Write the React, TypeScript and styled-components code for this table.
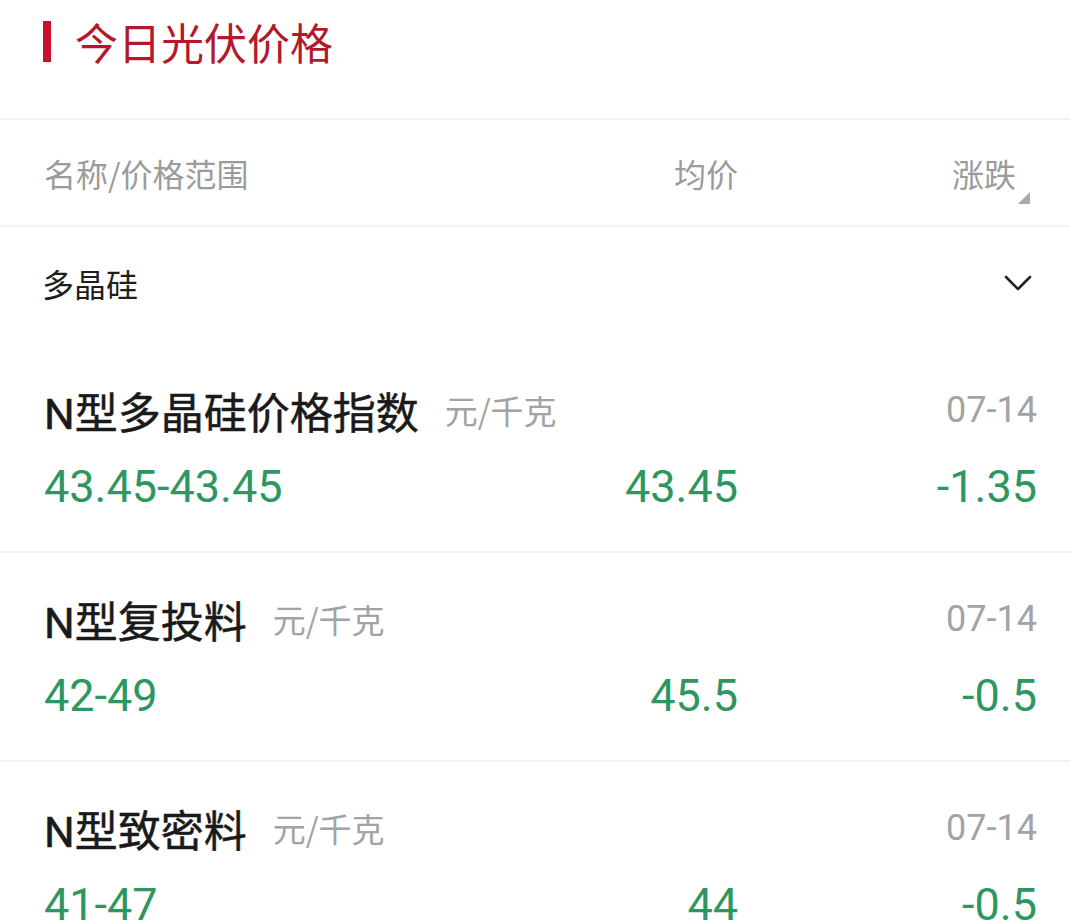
import React from 'react';
import styled, { createGlobalStyle } from 'styled-components';

const GlobalStyle = createGlobalStyle`
    body {
        margin: 0;
        background: #ffffff;
        font-family: Roboto, "Noto Sans CJK SC", sans-serif;
    }
`;

const Page = styled.div`
    width: 1070px;
    height: 922px;
    overflow: hidden;
    background: #ffffff;
`;

const TitleBar = styled.div`
    display: flex;
    align-items: center;
    gap: 24px;
    height: 120px;
    padding: 0 44px 36px 43px;
    box-sizing: border-box;
    border-bottom: 2px solid #f3f3f3;
`;

const Marker = styled.div`
    width: 8px;
    height: 41px;
    background: #c8102e;
`;

const Title = styled.h1`
    margin: 0;
    font-family: "Noto Sans CJK SC", sans-serif;
    font-size: 43px;
    font-weight: 400;
    line-height: 44px;
    color: #b3192b;
`;

const Grid = styled.div`
    display: grid;
    grid-template-columns: 1fr auto 299px;
    align-items: center;
    padding: 0 33px 0 44px;
`;

const HeaderRow = styled(Grid)`
    height: 105px;
    border-bottom: 2px solid #f3f3f3;
    font-family: "Noto Sans CJK SC", sans-serif;
    font-size: 32px;
    color: #9b9b9b;
`;

const HeadCell = styled.div<{ align?: string }>`
    text-align: ${(p) => p.align || 'left'};
`;

const SortLabel = styled.span`
    position: relative;
    margin-right: 21px;

    &::after {
        content: '';
        position: absolute;
        right: -14px;
        bottom: -8px;
        width: 0;
        height: 0;
        border-left: 12px solid transparent;
        border-bottom: 12px solid #a8a8a8;
    }
`;

const GroupRow = styled.div`
    display: flex;
    justify-content: space-between;
    align-items: center;
    height: 117px;
    padding: 0 38px 6px 42px;
    box-sizing: border-box;
    font-family: "Noto Sans CJK SC", sans-serif;
    font-size: 32px;
    color: #1e1e1e;
`;

const Item = styled.div`
    padding: 41px 33px 39px 44px;
    border-bottom: 2px solid #f3f3f3;
`;

const NameLine = styled.div`
    display: flex;
    align-items: center;
    height: 50px;
`;

const Name = styled.span`
    font-size: 43px;
    font-weight: 400;
    color: #1a1a1a;
    -webkit-text-stroke: 0.5px #1a1a1a;
`;

const Unit = styled.span`
    margin-left: 26px;
    font-family: "Noto Sans CJK SC", sans-serif;
    font-size: 33px;
    color: #a3a3a3;
`;

const DateText = styled.span`
    margin-left: auto;
    font-size: 36px;
    color: #a3a3a3;
`;

const ValueRow = styled(Grid)`
    padding: 0;
    margin-top: 25px;
    height: 52px;
    font-size: 45px;
    color: #2e965f;
`;

const Value = styled.div<{ align?: string }>`
    text-align: ${(p) => p.align || 'left'};
`;

const Chevron = () => (
    <svg width="28" height="16" viewBox="0 0 28 16">
        <path d="M2 2 L14 14 L26 2" fill="none" stroke="#222" strokeWidth="2.6" strokeLinecap="round" strokeLinejoin="round" />
    </svg>
);

const items = [
    { name: 'N型多晶硅价格指数', range: '43.45-43.45', avg: '43.45', change: '-1.35' },
    { name: 'N型复投料', range: '42-49', avg: '45.5', change: '-0.5' },
    { name: 'N型致密料', range: '41-47', avg: '44', change: '-0.5' },
];

const App: React.FC = () => (
    <Page>
        <GlobalStyle />
        <TitleBar>
            <Marker />
            <Title>今日光伏价格</Title>
        </TitleBar>
        <HeaderRow>
            <HeadCell>名称/价格范围</HeadCell>
            <HeadCell align="right">均价</HeadCell>
            <HeadCell align="right">
                <SortLabel>涨跌</SortLabel>
            </HeadCell>
        </HeaderRow>
        <GroupRow>
            <span>多晶硅</span>
            <Chevron />
        </GroupRow>
        {items.map((it) => (
            <Item key={it.name}>
                <NameLine>
                    <Name>{it.name}</Name>
                    <Unit>元/千克</Unit>
                    <DateText>07-14</DateText>
                </NameLine>
                <ValueRow>
                    <Value>{it.range}</Value>
                    <Value align="right">{it.avg}</Value>
                    <Value align="right">{it.change}</Value>
                </ValueRow>
            </Item>
        ))}
    </Page>
);

export default App;
